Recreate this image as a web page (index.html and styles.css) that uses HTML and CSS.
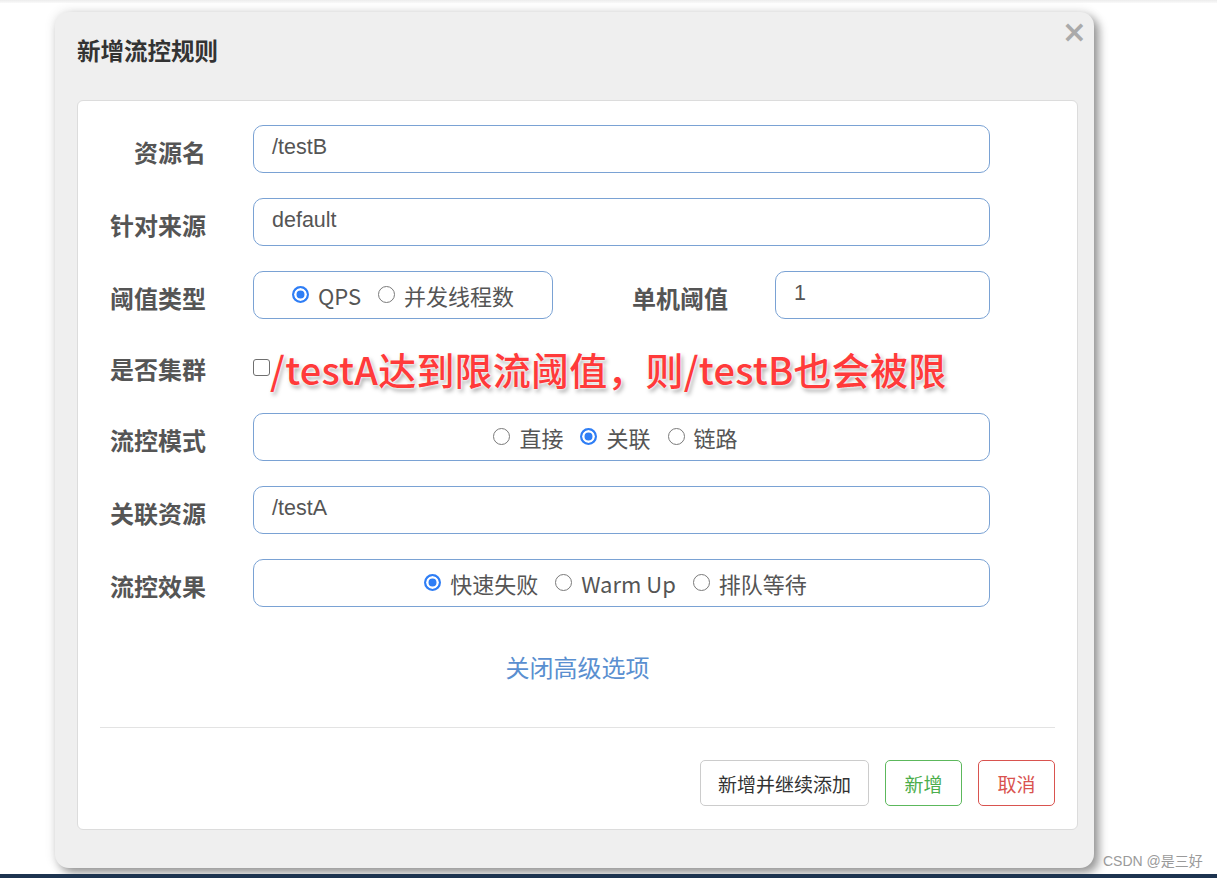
FILE: index.html
```html
<!DOCTYPE html>
<html lang="zh-CN">
<head>
<meta charset="utf-8">
<title>新增流控规则</title>
<link rel="stylesheet" href="styles.css">
</head>
<body>
<div class="page">
  <div class="top-line"></div>
  <div class="stage">
    <div class="modal">
      <div class="modal-header">
        <h3 class="modal-title">新增流控规则</h3>
        <span class="close">&times;</span>
      </div>
      <div class="panel">
        <div class="row">
          <label class="label">资源名</label>
          <div class="input wide">/testB</div>
        </div>
        <div class="row">
          <label class="label">针对来源</label>
          <div class="input wide">default</div>
        </div>
        <div class="row">
          <label class="label">阈值类型</label>
          <div class="radio-box small">
            <label class="opt"><input type="radio" name="grade" checked><span>QPS</span></label>
            <label class="opt"><input type="radio" name="grade"><span>并发线程数</span></label>
          </div>
          <label class="label label-mid">单机阈值</label>
          <div class="input narrow">1</div>
        </div>
        <div class="row row-cluster">
          <label class="label">是否集群</label>
          <div class="cluster">
            <input type="checkbox" class="check">
            <div class="note">/testA达到限流阈值，则/testB也会被限</div>
          </div>
        </div>
        <div class="row">
          <label class="label">流控模式</label>
          <div class="radio-box wide">
            <label class="opt"><input type="radio" name="strategy"><span>直接</span></label>
            <label class="opt"><input type="radio" name="strategy" checked><span>关联</span></label>
            <label class="opt"><input type="radio" name="strategy"><span>链路</span></label>
          </div>
        </div>
        <div class="row">
          <label class="label">关联资源</label>
          <div class="input wide">/testA</div>
        </div>
        <div class="row">
          <label class="label">流控效果</label>
          <div class="radio-box wide">
            <label class="opt"><input type="radio" name="behavior" checked><span>快速失败</span></label>
            <label class="opt"><input type="radio" name="behavior"><span>Warm Up</span></label>
            <label class="opt"><input type="radio" name="behavior"><span>排队等待</span></label>
          </div>
        </div>
        <div class="advanced"><a class="link">关闭高级选项</a></div>
        <div class="divider"></div>
        <div class="footer">
          <button class="btn btn-default">新增并继续添加</button>
          <button class="btn btn-success">新增</button>
          <button class="btn btn-danger">取消</button>
        </div>
      </div>
    </div>
  </div>
  <div class="bottom-bar"></div>
  <div class="watermark">CSDN @是三好</div>
</div>
</body>
</html>
```
FILE: styles.css
```css
* { box-sizing: border-box; }
html, body { margin: 0; padding: 0; }
body {
  background: #fff;
  font-family: "Open Sans", "Noto Sans CJK SC", sans-serif;
  color: #555;
}
.page {
  position: relative;
  width: 1217px;
  height: 878px;
  display: flex;
  flex-direction: column;
  overflow: hidden;
}
.top-line {
  height: 3px;
  background: linear-gradient(#ececec, #fafafa);
}
.stage {
  flex: 1;
  padding: 9px 0 0 55px;
}
.modal {
  width: 1039px;
  height: 856px;
  background: #efefef;
  border-radius: 14px;
  box-shadow: 5px 5px 10px rgba(0,0,0,0.38), 0 0 12px rgba(0,0,0,0.12);
  padding: 0 16px 0 22px;
  display: flex;
  flex-direction: column;
}
.modal-header {
  position: relative;
  height: 88px;
  padding-top: 21px;
}
.modal-title {
  margin: 0;
  font-family: "Noto Sans CJK SC", sans-serif;
  font-size: 23.5px;
  font-weight: 700;
  line-height: 34px;
  color: #333;
}
.close {
  position: absolute;
  right: -9px;
  top: 2px;
  font-family: "DejaVu Sans", sans-serif;
  font-size: 30px;
  font-weight: 700;
  line-height: 36px;
  color: #aaa;
}
.panel {
  width: 1001px;
  height: 730px;
  background: #fff;
  border: 1px solid #dcdcdc;
  border-radius: 6px;
  padding: 24px 22px 0 0;
  display: flex;
  flex-direction: column;
}
.row {
  display: flex;
  align-items: center;
  height: 48px;
  margin-bottom: 25px;
}
.row-cluster {
  height: 44px;
  margin-bottom: 25px;
}
.label {
  width: 128px;
  flex: none;
  text-align: right;
  font-family: "Noto Sans CJK SC", sans-serif;
  font-size: 24px;
  font-weight: 700;
  color: #555;
  padding-top: 4px;
  margin-right: 47px;
}
.label-mid {
  width: 175px;
}
.input {
  height: 48px;
  border: 1px solid #7aa2d4;
  border-radius: 10px;
  padding: 0 18px;
  display: flex;
  align-items: center;
  font-family: "Liberation Sans", sans-serif;
  font-size: 21.5px;
  color: #555;
  padding-bottom: 4px;
}
.wide { width: 737px; }
.narrow { width: 215px; }
.radio-box {
  height: 48px;
  border: 1px solid #7aa2d4;
  border-radius: 10px;
  display: flex;
  align-items: center;
  justify-content: center;
  gap: 17px;
  font-family: "Noto Sans CJK SC", sans-serif;
  font-size: 22px;
  color: #555;
}
.radio-box.small { width: 300px; }
.radio-box.wide { padding-right: 12px; }
.opt {
  display: flex;
  align-items: center;
}
.opt input {
  -webkit-appearance: none;
  appearance: none;
  width: 17px;
  height: 17px;
  margin: 0 9px 0 0;
  border: 1.5px solid #7a7a7a;
  border-radius: 50%;
  background: #fff;
  position: relative;
  top: -1px;
}
.opt input:checked {
  border: 2px solid #2f7ef5;
  background: #2f7ef5;
  box-shadow: inset 0 0 0 2.5px #fff;
}
.opt span { line-height: 30px; }
.cluster {
  position: relative;
  height: 44px;
  display: flex;
  align-items: center;
}
.check {
  -webkit-appearance: none;
  appearance: none;
  width: 17px;
  height: 17px;
  margin: 0;
  border: 1.5px solid #6f6f6f;
  border-radius: 3px;
  background: #fff;
  position: relative;
  top: 1px;
}
.note {
  position: absolute;
  left: 17px;
  top: -3px;
  white-space: nowrap;
  font-family: "Noto Sans CJK SC", sans-serif;
  font-size: 38px;
  font-weight: 500;
  line-height: 56px;
  color: #ff3a3a;
  letter-spacing: 0.2px;
  text-shadow: 0 0 2px #fff, 0 0 3px #fff, 2px 3px 4px rgba(0,0,0,0.35);
}
.advanced {
  margin-top: 15px;
  text-align: center;
  height: 40px;
  padding-left: 22px;
}
.link {
  font-family: "Noto Sans CJK SC", sans-serif;
  font-size: 24px;
  line-height: 40px;
  color: #5a8fd0;
  cursor: pointer;
}
.divider {
  margin: 40px 0 0 22px;
  height: 1px;
  background: #e3e3e3;
}
.footer {
  margin-top: 32px;
  display: flex;
  justify-content: flex-end;
  gap: 16px;
}
.btn {
  height: 46px;
  padding: 0 10px;
  background: #fff;
  border: 1px solid #ccc;
  border-radius: 5px;
  font-family: "Noto Sans CJK SC", sans-serif;
  font-size: 19px;
  color: #333;
  cursor: pointer;
}
.btn-default { width: 169px; }
.btn-success { width: 77px; border-color: #5cb85c; color: #4cae4c; }
.btn-danger { width: 77px; border-color: #d9534f; color: #d9534f; }
.bottom-bar {
  height: 4px;
  background: #1d3450;
}
.watermark {
  position: absolute;
  left: 1103px;
  top: 850px;
  font-family: "Liberation Sans", "Noto Sans CJK SC", sans-serif;
  font-size: 14px;
  color: #9a9a9a;
}
```
